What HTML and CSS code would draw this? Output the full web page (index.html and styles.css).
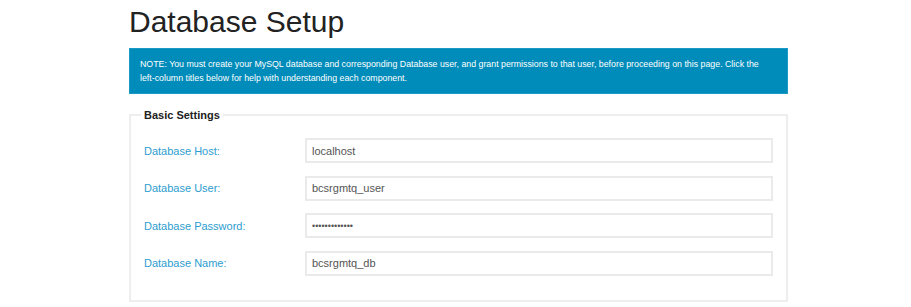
FILE: index.html
```html
<!DOCTYPE html>
<html>
<head>
	<meta charset="utf-8">
	<title>Database Setup</title>
<link rel="stylesheet" href="styles.css">
</head>
<body>
	<div class="page">
		<h1>Database Setup</h1>

		<div class="note">
			NOTE: You must create your MySQL database and corresponding Database user, and grant permissions to that user, before proceeding on this page. Click the <span class="nowrap">left-column</span> titles below for help with understanding each component.
		</div>

		<fieldset class="settings">
			<legend>Basic Settings</legend>
			<div class="row">
				<label for="db-host">Database Host:</label>
				<input id="db-host" type="text" value="localhost">
			</div>
			<div class="row">
				<label for="db-user">Database User:</label>
				<input id="db-user" type="text" value="bcsrgmtq_user">
			</div>
			<div class="row">
				<label for="db-pass">Database Password:</label>
				<input id="db-pass" class="secret" type="password" value="secretpasswd1">
			</div>
			<div class="row">
				<label for="db-name">Database Name:</label>
				<input id="db-name" type="text" value="bcsrgmtq_db">
			</div>
		</fieldset>
	</div>
</body>
</html>
```

FILE: styles.css
```css
* {
	margin: 0;
	padding: 0;
	box-sizing: border-box;
	font-family: "Liberation Sans", Arial, sans-serif;
}

body {
	background-color: #fff;
}

.page {
	width: 659px;
	margin-left: 129px;
}

h1 {
	color: #222;
	font-size: 30px;
	font-weight: normal;
	line-height: 36px;
	margin: 4px 0 8px;
}

.note {
	background: #008cba;
	border: 1px solid #1c9ac6;
	color: #fff;
	font-size: 8.8px;
	line-height: 14px;
	padding: 8px 10px;
	height: 46px;
}

.nowrap {
	white-space: nowrap;
}

.settings {
	margin-top: 13px;
	border: 2px solid #eee;
	padding: 15px 12px 24px 12px;
}

.settings legend {
	font-size: 11px;
	font-weight: bold;
	line-height: 16px;
	color: #222;
	padding: 0 3px;
	margin-left: -2px;
}

.row {
	display: flex;
	align-items: center;
	margin-bottom: 12.5px;
}

.row:last-child {
	margin-bottom: 0;
}

.row label {
	width: 162px;
	padding-left: 1px;
	font-size: 11px;
	color: #2d9dcf;
	cursor: pointer;
}

.row input {
	width: 468px;
	height: 25px;
	border: 2px solid #eaeaea;
	padding: 0 5px;
	font-size: 11px;
	color: #555;
	outline: none;
}

.row input.secret {
	font-size: 9px;
	letter-spacing: 0;
}
```
